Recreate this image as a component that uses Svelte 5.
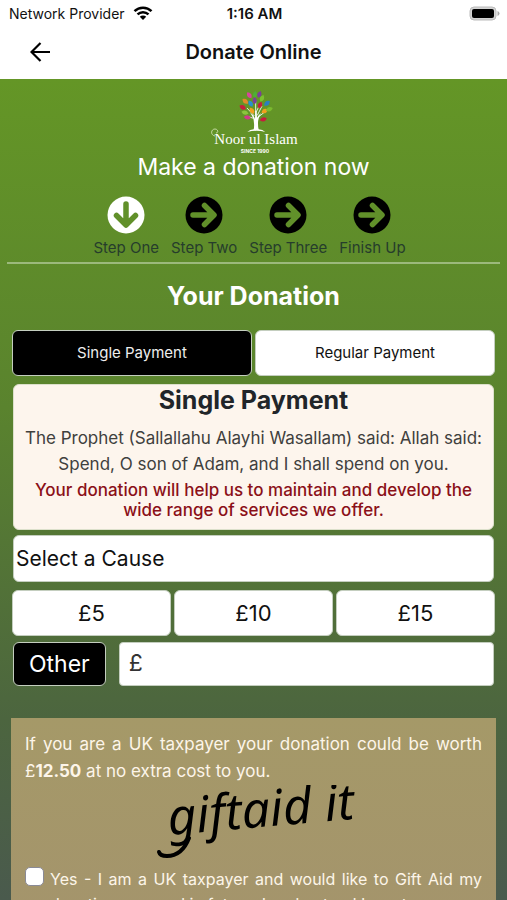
<script>
  const steps = ['Step One', 'Step Two', 'Step Three', 'Finish Up'];
  const amounts = [5, 10, 15];
  const leaves = [
    [175, 46, -35, '#d8449b'], [192, 44, 5, '#4fae35'], [205, 43, 20, '#7b3f98'], [213, 55, 25, '#7bc02f'],
    [155, 82, -60, '#c51f3c'], [163, 64, -50, '#e08a2a'], [179, 71, -30, '#2a8fd0'], [207, 75, 25, '#c51f3c'],
    [228, 70, 50, '#2a7fc0'], [183, 92, -35, '#f0a01e'], [162, 98, -75, '#8ac63c'], [169, 112, -80, '#d13a8a'],
    [221, 93, 60, '#f0a01e'], [235, 88, 70, '#7bb92f'], [217, 118, 75, '#c51f3c'], [191, 62, 0, '#7b3f98']
  ];
  let mode = $state('single');
  let step = $state(0);
  let amount = $state('');
</script>

<div class="screen">
  <div class="status">
    <span class="carrier">
      Network Provider
      <svg width="20" height="15" viewBox="0 0 20 15" aria-hidden="true">
        <path d="M1.5 5.2a12.2 12.2 0 0 1 17 0M4.5 8.4a8 8 0 0 1 11 0" fill="none" stroke="#000" stroke-width="2.5" />
        <path d="M6.8 10.8a4.6 4.6 0 0 1 6.4 0L10 14z" />
      </svg>
    </span>
    <time>1:16 AM</time>
    <svg class="battery" width="31" height="15" viewBox="0 0 31 15" aria-label="Battery full" role="img">
      <rect x="1" y="1" width="26" height="13" rx="4" fill="#d4d4d4" stroke="#bbb" />
      <rect x="3" y="3" width="22" height="9" rx="2" />
      <path d="M28.500 5q2 .8 2 2.500t-2 2.500z" fill="#aaa" />
    </svg>
  </div>
  <header>
    <button class="back" aria-label="Back">
      <svg width="20" height="20" viewBox="0 0 20 20" fill="none" stroke="#000" stroke-width="2.200" aria-hidden="true">
        <path d="M10.500 1 1.500 10l9 9M1.500 10H20" />
      </svg>
    </button>
    <h1>Donate Online</h1>
  </header>

  <main>
    <svg class="logo" width="90" height="66" viewBox="0 0 90 66" role="img" aria-label="Noor ul Islam">
      <g transform="translate(-18 -8) scale(.3333)">
        <path
          d="M194 105V60M190 108 168 84M199 106l14-28M188 115l-20-6M201 112l20-16M196 95l10-20"
          fill="none" stroke="#fff" stroke-width="2.500"
        />
        {#each leaves as [x, y, angle, color]}
          <path d="M0-11Q13 0 0 11Q-13 0 0-11" fill={color} transform="translate({x} {y}) rotate({angle})" />
        {/each}
        <path d="M177 99q12 6 15 18l1-24h4l1 20q5-9 13-14-10 14-10 31 0 12 2 18 12 1 20 8-26-7-54 0 8-7 19-8 2-8 1-18 0-18-12-31z" fill="#fff" />
      </g>
      <path d="M6 48c-5-1-4-7 0-7 3 0 4 4 1 4" fill="none" stroke="#d9e8bd" stroke-width=".8" />
      <text x="47" y="56" class="brand">Noor ul Islam</text>
      <text x="46" y="65" class="since">SINCE 1990</text>
    </svg>
    <p class="lead">Make a donation now</p>

    <nav aria-label="Donation steps">
      {#each steps as label, i}
        <button class="step" onclick={() => (step = i)}>
          <svg width="38" height="38" viewBox="0 0 38 38" aria-hidden="true">
            <circle cx="19" cy="19" r="18.500" fill={step === i ? '#fff' : '#000'} />
            <path
              d="M8 19H28M19.500 9.500 29 19 19.500 28.500"
              fill="none" stroke="#61902a" stroke-width="5.500" stroke-linejoin="round" stroke-linecap="round"
              transform={step === i ? 'rotate(90 19 19)' : undefined}
            />
          </svg>
          <span>{label}</span>
        </button>
      {/each}
    </nav>
    <hr />

    <form onsubmit={(e) => e.preventDefault()}>
      <h2>Your Donation</h2>
      <div class="row modes">
        <button type="button" class:active={mode === 'single'} onclick={() => (mode = 'single')}>Single Payment</button>
        <button type="button" class:active={mode === 'regular'} onclick={() => (mode = 'regular')}>Regular Payment</button>
      </div>
      <section class="quote">
        <h3>Single Payment</h3>
        <p>The Prophet (Sallallahu Alayhi Wasallam) said: Allah said: Spend, O son of Adam, and I shall spend on you.</p>
        <p class="appeal">Your donation will help us to maintain and develop the wide range of services we offer.</p>
      </section>
      <select class="cause" aria-label="Cause">
        <option>Select a Cause</option>
      </select>
      <div class="row amounts">
        {#each amounts as value}
          <button type="button" onclick={() => (amount = value)}>£{value}</button>
        {/each}
      </div>
      <div class="other">
        <label for="other">Other</label>
        <input id="other" placeholder="£" inputmode="decimal" bind:value={amount} />
      </div>
      <section class="gift">
        <p>If you are a UK taxpayer your donation could be worth £<b>12.50</b> at no extra cost to you.</p>
        <svg class="giftaid" width="220" height="82" viewBox="0 0 220 82">
          <text x="25" y="50" transform="rotate(-5 25 50)">giftaid it</text>
          <path d="M45 53Q38 71 23 71Q16 71 15 67" fill="none" stroke="#000" stroke-width="4" stroke-linecap="round" />
        </svg>
        <div class="consent">
          <input type="checkbox" id="consent" />
          <label for="consent">Yes - I am a UK taxpayer and would like to Gift Aid my donation now and in future. I understand I must pay</label>
        </div>
      </section>
    </form>
  </main>
</div>

<style>
  :global(body) { margin: 0; }
  * { box-sizing: border-box; }
  .screen {
    height: 100vh;
    display: flex;
    flex-direction: column;
    font-family: Inter, 'Liberation Sans', sans-serif;
    color: #212529;
    background: #fff;
  }
  h1, h2, h3, p { margin: 0; }
  button, select, input { font: inherit; color: inherit; }
  svg { display: block; flex: none; }
  .status {
    display: grid;
    grid-template-columns: 1fr auto 1fr;
    align-items: center;
    height: 27px;
    padding: 0 7px 0 9px;
    font-size: 14px;
    color: #111;
  }
  .carrier { display: flex; align-items: center; gap: 8px; white-space: nowrap; }
  time { font-size: 15px; font-weight: 600; }
  .battery { justify-self: end; }
  header {
    display: grid;
    grid-template-columns: 1fr auto 1fr;
    align-items: center;
    height: 52px;
    padding: 0 30px 2px;
  }
  .back { justify-self: start; padding: 0; border: 0; background: none; }
  h1 { font-size: 20px; font-weight: 600; line-height: 24px; color: #111; }
  main {
    flex: 1;
    min-height: 0;
    overflow-y: auto;
    scrollbar-width: none;
    padding-top: 9px;
    background: linear-gradient(#649626, #5a832e 40%, #4c653f 78%, #4a5a4d);
  }
  .logo { margin: 0 auto; }
  .brand { font: 15px 'Liberation Serif', serif; fill: #fff; text-anchor: middle; }
  .since { font: bold 5px Inter, sans-serif; fill: #fff; text-anchor: middle; }
  .lead { font-size: 23px; line-height: 26px; color: #fff; text-align: center; }
  nav { display: flex; justify-content: center; gap: 12px; margin-top: 16px; padding-right: 8px; }
  .step {
    display: flex;
    flex-direction: column;
    align-items: center;
    gap: 4px;
    padding: 0;
    border: 0;
    background: none;
    font-size: 15px;
    line-height: 20px;
    color: #263d2c;
  }
  hr { height: 2px; margin: 4px 7px 0; border: 0; background: #9cb97c; }
  form { padding: 0 12px; }
  h2 { margin: 15px 0 17px; font-size: 25px; font-weight: 700; line-height: 34px; color: #fff; text-align: center; }
  .row { display: flex; gap: 3px; }
  .row button {
    flex: 1;
    height: 46px;
    padding: 0;
    border: 1px solid #c4cebf;
    border-radius: 6px;
    background: #fff;
    color: #111;
  }
  .modes button { padding-bottom: 2px; font-size: 15px; }
  .row button.active { background: #000; color: #eee; }
  .quote {
    margin: 8px 1px 5px;
    padding: 0 8px 9px;
    border: 1px solid #dce0cb;
    border-radius: 6px;
    background: #fdf5ed;
    text-align: center;
  }
  h3 { margin-bottom: 9px; font-size: 25px; font-weight: 700; line-height: 31px; }
  .quote p { font-size: 17px; line-height: 26px; color: #40403d; }
  .quote .appeal { margin-top: 3px; font-weight: 500; line-height: 20px; color: #8b1018; }
  .cause {
    display: block;
    width: calc(100% - 2px);
    height: 47px;
    margin: 0 1px 8px;
    padding: 0 2px;
    appearance: none;
    border: 1px solid #c4cebf;
    border-radius: 6px;
    background: #fff;
    font-size: 21px;
    color: #111;
  }
  .amounts button { font-size: 22px; }
  .other { display: flex; align-items: center; gap: 13px; margin: 6px 1px 32px; }
  .other label {
    padding: 0 15px;
    border: 1px solid #c4cebf;
    border-radius: 6px;
    background: #000;
    font-size: 23px;
    line-height: 42px;
    color: #fff;
  }
  .other input {
    flex: 1;
    min-width: 0;
    height: 44px;
    padding: 0 9px 3px;
    border: 1px solid #c4cebf;
    border-radius: 4px;
    background: #fff;
    font-size: 23px;
  }
  .other input::placeholder { color: #333; opacity: 1; }
  .gift {
    margin: 0 -1px;
    padding: 13px 14px;
    background: linear-gradient(#a59968, #a4946c);
    font-size: 17px;
    line-height: 27px;
    color: #fdf5e9;
    text-align: justify;
  }
  .giftaid { margin: 0 auto; }
  .giftaid text { font: italic 50px 'Noto Sans', sans-serif; fill: #000; }
  .consent { display: flex; align-items: flex-start; gap: 6px; }
  .consent label { flex: 1; font-size: 16px; line-height: 25px; }
  .consent input {
    appearance: none;
    flex: none;
    width: 19px;
    height: 19px;
    margin: 0;
    border: 1px solid #8a8a96;
    border-radius: 5px;
    background: #fff;
  }
  .consent input:checked { background: #1769e0; }
</style>
